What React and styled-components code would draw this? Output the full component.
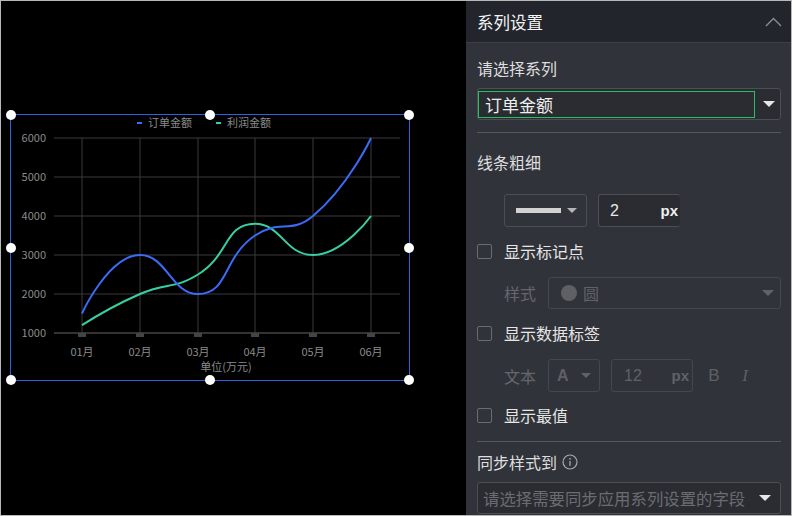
import React from 'react'
import styled, { createGlobalStyle } from 'styled-components'

const GlobalStyle = createGlobalStyle`
  html, body {
    margin: 0;
    padding: 0;
    background: #000;
  }
  * {
    box-sizing: border-box;
  }
`

const FONT = `'Noto Sans CJK SC', 'Noto Sans', sans-serif`

const Window = styled.div`
  width: 792px;
  height: 516px;
  border: 1px solid #b8b8b8;
  display: flex;
  overflow: hidden;
  font-family: ${FONT};
`

const Canvas = styled.div`
  flex: 1;
  background: #000;
  position: relative;
`

const Widget = styled.div`
  position: absolute;
  left: 9px;
  top: 113px;
  width: 400px;
  height: 267px;
  border: 1.5px solid #2a62e0;
`

const ChartSvg = styled.svg`
  position: absolute;
  left: -1.5px;
  top: -1.5px;
  overflow: visible;
`

const Handle = styled.span`
  position: absolute;
  width: 10px;
  height: 10px;
  border-radius: 50%;
  background: #fff;
  left: ${p => p.$x}%;
  top: ${p => p.$y}%;
  transform: translate(-50%, -50%);
`

const Panel = styled.div`
  width: 325px;
  background: #30333a;
  display: flex;
  flex-direction: column;
`

const Header = styled.div`
  height: 42px;
  background: #22252c;
  border-bottom: 1px solid #3c3f46;
  display: flex;
  align-items: center;
  justify-content: space-between;
  padding: 0 9px 0 11px;
  color: #f4f4f4;
  font-size: 16.5px;
`

const Body = styled.div`
  padding: 0 10px 0 11px;
  display: flex;
  flex-direction: column;
`

const Label = styled.div`
  margin-top: ${p => p.$mt}px;
  height: 20px;
  line-height: 20px;
  font-size: 16px;
  color: #dedede;
  display: flex;
  align-items: center;
  gap: 5px;
`

const Divider = styled.div`
  margin-top: ${p => p.$mt}px;
  height: 1px;
  background: #55585f;
`

const Select = styled.div`
  margin-top: ${p => p.$mt}px;
  height: 32px;
  border: 1px solid #4b4e55;
  border-radius: 3px;
  background: #2a2c32;
  display: flex;
  align-items: center;
  padding: 0 ${p => p.$pr || 0}px 0 ${p => p.$pl || 0}px;
  gap: 8px;
`

const Focus = styled.div`
  flex: 1;
  align-self: stretch;
  margin: 2px 0 1px 0;
  border: 1px solid #27c25d;
  display: flex;
  align-items: center;
  padding-left: 6px;
  font-size: 17px;
  color: #eeeeee;
`

const Placeholder = styled.div`
  flex: 1;
  font-size: 16.4px;
  color: #6a6c72;
  white-space: nowrap;
  overflow: hidden;
`

const Caret = styled.span`
  width: 0;
  height: 0;
  border-left: ${p => p.$s || 6}px solid transparent;
  border-right: ${p => p.$s || 6}px solid transparent;
  border-top: ${p => (p.$s || 6) * 1.1}px solid ${p => p.$c || '#e6e6e6'};
  flex-shrink: 0;
`

const Row = styled.div`
  margin-top: ${p => p.$mt}px;
  height: ${p => p.$h || 33}px;
  display: flex;
  align-items: center;
  padding-left: 27px;
  gap: ${p => p.$gap || 11}px;
`

const Box = styled.div`
  width: ${p => p.$w}px;
  height: ${p => p.$h || 33}px;
  border: 1px solid ${p => (p.$dim ? '#44474e' : '#4b4e55')};
  ${p => p.$noRight && 'border-right: none;'}
  border-radius: 3px;
  background: ${p => (p.$dark ? '#2a2c31' : 'transparent')};
  display: flex;
  align-items: center;
  padding: 0 ${p => p.$pr || 8}px 0 ${p => p.$pl || 11}px;
  gap: 6px;
  flex: ${p => (p.$grow ? 1 : 'none')};
`

const LineSample = styled.span`
  width: 47px;
  height: 5px;
  background: #d2d2d2;
`

const NumText = styled.span`
  flex: 1;
  font-family: 'Liberation Sans', Arial, sans-serif;
  font-size: 16px;
  color: ${p => (p.$dim ? '#606268' : '#e8e8e8')};
`

const Unit = styled.span`
  font-family: 'Liberation Sans', Arial, sans-serif;
  font-size: 15px;
  font-weight: bold;
  color: ${p => (p.$dim ? '#606268' : '#f0f0f0')};
`

const DimLabel = styled.span`
  font-size: 16px;
  color: #65676d;
  width: 33px;
  flex-shrink: 0;
`

const Dot = styled.span`
  width: 16px;
  height: 16px;
  border-radius: 50%;
  background: #5e6066;
`

const DimText = styled.span`
  flex: 1;
  font-size: 16px;
  color: #606268;
`

const FontGlyph = styled.span`
  font-family: 'Liberation Sans', Arial, sans-serif;
  font-size: 16px;
  font-weight: bold;
  color: #5e6066;
  flex: 1;
`

const StyleBtn = styled.span`
  font-family: ${p => (p.$serif ? "'Liberation Serif', serif" : "'Liberation Sans', Arial, sans-serif")};
  font-size: 17px;
  font-style: ${p => (p.$serif ? 'italic' : 'normal')};
  color: #5e6066;
  width: 20px;
  text-align: center;
`

const Check = styled.label`
  margin-top: ${p => p.$mt}px;
  height: 20px;
  display: flex;
  align-items: center;
  gap: 12px;
  font-size: 16px;
  color: #e6e6e6;
`

const CheckBox = styled.span`
  width: 15px;
  height: 15px;
  border: 1px solid #6a6c72;
  border-radius: 2px;
`

const months = ['01月', '02月', '03月', '04月', '05月', '06月']
const xs = [82, 140, 198, 255, 313, 371]
const orders = [1500, 3000, 2000, 3500, 4000, 6000]
const profits = [1200, 2000, 2500, 3800, 3000, 4000]
const yOf = v => 333 - (v - 1000) * 0.039

const clamp = (v, a, b) => Math.max(Math.min(a, b), Math.min(v, Math.max(a, b)))

// echarts-like smooth curve (control points clamped to neighbours)
const smoothPath = vals => {
  const pts = vals.map((v, i) => [xs[i], yOf(v)])
  const smooth = 0.5
  const cpIn = []
  const cpOut = []
  pts.forEach((p, i) => {
    if (i === 0 || i === pts.length - 1) {
      cpIn[i] = p
      cpOut[i] = p
      return
    }
    const [px, py] = pts[i - 1]
    const [nx, ny] = pts[i + 1]
    const [x, y] = p
    const lp = Math.hypot(x - px, y - py)
    const ln = Math.hypot(nx - x, ny - y)
    const r = ln / (ln + lp)
    let vx = nx - px
    let vy = ny - py
    let c1x = clamp(x + vx * smooth * r, nx, x)
    let c1y = clamp(y + vy * smooth * r, ny, y)
    vx = c1x - x
    vy = c1y - y
    let c0x = clamp(x - (vx * lp) / ln, px, x)
    let c0y = clamp(y - (vy * lp) / ln, py, y)
    vx = x - c0x
    vy = y - c0y
    c1x = x + (vx * ln) / lp
    c1y = y + (vy * ln) / lp
    cpIn[i] = [c0x, c0y]
    cpOut[i] = [c1x, c1y]
  })
  let d = `M${pts[0][0]},${pts[0][1]}`
  for (let i = 1; i < pts.length; i++) {
    const a = cpOut[i - 1]
    const b = cpIn[i]
    d += ` C${a[0]},${a[1]} ${b[0]},${b[1]} ${pts[i][0]},${pts[i][1]}`
  }
  return d
}

const Chart = () => (
  <ChartSvg width='400' height='267' viewBox='10 114 400 267'>
    <g fontFamily={FONT} fontSize='11' fill='#8a8a8a'>
      <line x1='137' y1='123' x2='142' y2='123' stroke='#3b6cf8' strokeWidth='2' />
      <text x='148' y='127'>订单金额</text>
      <line x1='216' y1='123' x2='221' y2='123' stroke='#36d0a5' strokeWidth='2' />
      <text x='227' y='127'>利润金额</text>
      {[6000, 5000, 4000, 3000, 2000].map(v => (
        <line key={v} x1='54' x2='400' y1={yOf(v)} y2={yOf(v)} stroke='#3a3a3a' />
      ))}
      {xs.map(x => (
        <line key={x} x1={x} x2={x} y1='138' y2='333' stroke='#3a3a3a' />
      ))}
      <line x1='54' x2='400' y1='333' y2='333' stroke='#444' strokeWidth='1.5' />
      {xs.map(x => (
        <rect key={x} x={x - 4} y='333' width='8' height='4' fill='#444' />
      ))}
      {[6000, 5000, 4000, 3000, 2000, 1000].map(v => (
        <text key={v} x='46' y={yOf(v) + 4} textAnchor='end'>{v}</text>
      ))}
      {months.map((m, i) => (
        <text key={m} x={xs[i]} y='356' textAnchor='middle'>{m}</text>
      ))}
      <text x='226' y='371' textAnchor='middle'>单位(万元)</text>
    </g>
    <path d={smoothPath(profits)} fill='none' stroke='#36d0a5' strokeWidth='2' />
    <path d={smoothPath(orders)} fill='none' stroke='#3b6cf8' strokeWidth='2' />
  </ChartSvg>
)

const handles = [
  [0, 0], [50, 0], [100, 0],
  [0, 50], [100, 50],
  [0, 100], [50, 100], [100, 100]
]

const App = () => (
  <>
    <GlobalStyle />
    <Window>
      <Canvas>
        <Widget>
          <Chart />
          {handles.map(([x, y]) => (
            <Handle key={`${x}-${y}`} $x={x} $y={y} />
          ))}
        </Widget>
      </Canvas>
      <Panel>
        <Header>
          <span>系列设置</span>
          <svg width='17' height='10' viewBox='0 0 17 10'>
            <polyline points='1,9 8.5,1.5 16,9' fill='none' stroke='#8a8c94' strokeWidth='1.4' />
          </svg>
        </Header>
        <Body>
          <Label $mt={15}>请选择系列</Label>
          <Select $mt={10} $pr={5}>
            <Focus>订单金额</Focus>
            <Caret />
          </Select>
          <Divider $mt={12} />
          <Label $mt={19}>线条粗细</Label>
          <Row $mt={22}>
            <Box $w={83} $pl={11} $pr={9}>
              <LineSample />
              <Caret $s={5} $c='#b4b4b4' />
            </Box>
            <Box $w={82} $dark $noRight $pl={11} $pr={2}>
              <NumText>2</NumText>
              <Unit>px</Unit>
            </Box>
          </Row>
          <Check $mt={14}>
            <CheckBox />
            显示标记点
          </Check>
          <Row $mt={16} $h={32} $gap={11}>
            <DimLabel>样式</DimLabel>
            <Box $w={232} $h={32} $dim $grow $pl={12} $pr={6}>
              <Dot />
              <DimText>圆</DimText>
              <Caret $c='#606268' />
            </Box>
          </Row>
          <Check $mt={14}>
            <CheckBox />
            显示数据标签
          </Check>
          <Row $mt={16} $gap={11}>
            <DimLabel>文本</DimLabel>
            <Box $w={52} $dim $pl={8} $pr={8}>
              <FontGlyph>A</FontGlyph>
              <Caret $s={5} $c='#606268' />
            </Box>
            <Box $w={82} $dim $pl={12} $pr={3}>
              <NumText $dim>12</NumText>
              <Unit $dim>px</Unit>
            </Box>
            <StyleBtn>B</StyleBtn>
            <StyleBtn $serif>I</StyleBtn>
          </Row>
          <Check $mt={13}>
            <CheckBox />
            显示最值
          </Check>
          <Divider $mt={16} />
          <Label $mt={10}>
            同步样式到
            <svg width='16' height='16' viewBox='0 0 16 16'>
              <circle cx='8' cy='8' r='7' fill='none' stroke='#a8aab0' strokeWidth='1.2' />
              <circle cx='8' cy='4.8' r='0.9' fill='#a8aab0' />
              <line x1='8' y1='7' x2='8' y2='11.8' stroke='#a8aab0' strokeWidth='1.3' />
            </svg>
          </Label>
          <Select $mt={10} $pl={5} $pr={9}>
            <Placeholder>请选择需要同步应用系列设置的字段</Placeholder>
            <Caret />
          </Select>
        </Body>
      </Panel>
    </Window>
  </>
)

export default App
